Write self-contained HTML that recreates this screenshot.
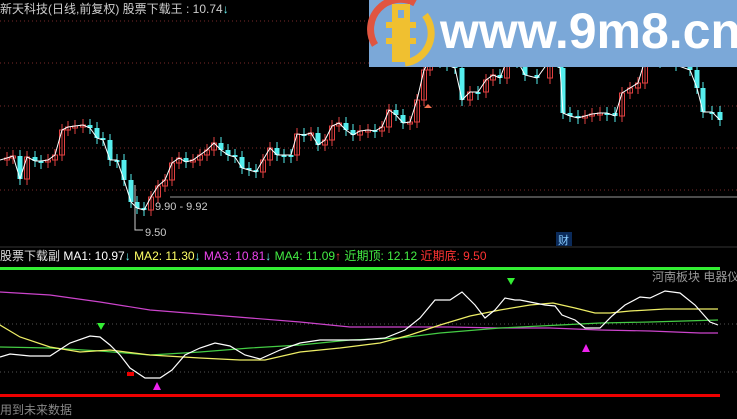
<!DOCTYPE html>
<html><head><meta charset="utf-8"><style>
html,body{margin:0;padding:0;background:#000;width:737px;height:419px;overflow:hidden}
svg{display:block}
text{font-family:"Liberation Sans","Noto Sans CJK SC",sans-serif}
</style></head><body>
<svg id="s" width="737" height="419" xmlns="http://www.w3.org/2000/svg">
<rect width="737" height="419" fill="#000"/>
<g stroke="#7a2a2a" stroke-dasharray="1,3" stroke-width="1">
<line x1="0" y1="21" x2="737" y2="21"/><line x1="0" y1="63" x2="737" y2="63"/>
<line x1="0" y1="106" x2="737" y2="106"/><line x1="0" y1="148" x2="737" y2="148"/>
<line x1="0" y1="190" x2="737" y2="190"/>
</g>
<g stroke="#555" stroke-dasharray="1,3"><line x1="0" y1="324" x2="737" y2="324"/><line x1="0" y1="372" x2="737" y2="372"/></g>
<line x1="170" y1="197" x2="737" y2="197" stroke="#999"/>
<line x1="0" y1="247" x2="737" y2="247" stroke="#333"/>
<g id="candles"></g>
<polyline id="close" fill="none" stroke="#fff" stroke-width="1"/>
<polyline points="135,185 135,230 143,230" fill="none" stroke="#ccc"/>
<text x="155" y="210" font-size="11" fill="#ccc">9.90 - 9.92</text>
<text x="145" y="236" font-size="11" fill="#ccc">9.50</text>
<path d="M424,108 l4,-4 l4,4z" fill="#f07050"/>
<rect x="556" y="232" width="16" height="14" fill="#0a2a5a"/>
<text x="558" y="244" font-size="11" fill="#8cf">财</text>
<text x="0" y="13" font-size="12" fill="#ccc">新天科技(日线,前复权) 股票下载王 : 10.74<tspan fill="#6ee">↓</tspan></text>
<text x="0" y="260" font-size="12" fill="#ddd">股票下载副 <tspan fill="#fff">MA1: 10.97</tspan><tspan fill="#6ee">↓</tspan> <tspan fill="#ff6">MA2: 11.30</tspan><tspan fill="#6ee">↓</tspan> <tspan fill="#e4e">MA3: 10.81</tspan><tspan fill="#6ee">↓</tspan> <tspan fill="#4e4">MA4: 11.09</tspan><tspan fill="#f44">↑</tspan>   <tspan fill="#4e4">近期顶: 12.12</tspan>   <tspan fill="#f33">近期底: 9.50</tspan></text>
<rect x="0" y="267" width="720" height="3" fill="#3e3"/>
<rect x="0" y="394" width="720" height="3" fill="#e00"/>
<text x="652" y="281" font-size="12" fill="#999">河南板块  电器仪</text>
<text x="0" y="414" font-size="12" fill="#888">用到未来数据</text>
<polyline fill="none" stroke="#c4c" stroke-width="1.2" points="0,292 50,295 100,302 150,310 200,314 250,318 300,322 350,327 400,327 450,327 500,328 550,328 600,330 650,331 700,333 718,333"/>
<polyline fill="none" stroke="#4c4" stroke-width="1.2" points="0,347 50,348 100,351 150,355 200,352 250,348 300,345 350,340 400,338 440,333 500,328 560,325 600,323 650,322 718,320"/>
<polyline fill="none" stroke="#ee6" stroke-width="1.2" points="0,325 20,337 50,347 80,352 110,350 150,355 200,358 240,360 265,360 300,352 340,348 380,343 410,335 440,325 470,316 500,310 530,305 553,303 575,308 595,313 610,313 630,311 665,309 675,309 718,309"/>
<polyline fill="none" stroke="#fff" stroke-width="1.2" points="0,357 10,354 30,356 50,356 70,343 90,336 100,337 110,345 120,355 130,368 145,378 160,378 172,370 185,355 200,348 215,343 230,346 245,355 260,359 280,350 300,343 320,340 340,340 360,340 385,338 405,330 420,318 435,300 450,300 462,292 475,305 485,318 495,310 505,298 515,300 520,300 535,303 545,305 555,306 562,315 575,320 585,328 590,328 600,328 612,316 625,305 640,297 650,298 665,291 680,293 695,305 710,322 718,325"/>
<path d="M97,323 h8 l-4,7z M507,278 h8 l-4,7z" fill="#3e3"/>
<path d="M153,390 h8 l-4,-8z M582,352 h8 l-4,-8z" fill="#e2e"/>
<rect x="127" y="372" width="7" height="4" fill="#e00"/>
<rect x="369" y="0" width="368" height="67" fill="#7ba8d8"/>
<path d="M375,45 A30,30 0 0 1 415,3" fill="none" stroke="#e05540" stroke-width="7"/>
<path d="M425,15 A30,30 0 0 1 405,63" fill="none" stroke="#f0c030" stroke-width="7"/>
<rect x="392" y="4" width="18" height="58" fill="#f0c030"/>
<rect x="386" y="22" width="30" height="6" fill="#f0c030"/>
<rect x="386" y="38" width="30" height="6" fill="#f0c030"/>
<rect x="398" y="10" width="6" height="8" fill="#7ba8d8"/>
<text x="440" y="48" font-size="50" font-weight="bold" fill="#fff">www.9m8.cn</text>
</svg>
<script>
var pts=[[0,160],[7,158],[13,156],[20,179],[27,157],[35,161],[41,161],[48,160],[55,155],[62,130],[68,127],[75,126],[83,125],[90,128],[97,138],[103,140],[110,160],[117,160],[124,180],[131,202],[137,208],[144,210],[151,197],[158,186],[165,180],[172,163],[179,158],[186,162],[193,160],[200,155],[207,150],[214,143],[221,150],[228,155],[235,157],[242,168],[249,170],[256,172],[263,160],[270,148],[277,155],[284,155],[291,155],[297,134],[304,135],[311,133],[318,145],[325,140],[332,126],[339,123],[346,130],[353,135],[360,131],[368,130],[375,131],[382,127],[389,110],[396,115],[403,123],[410,122],[417,100],[424,70],[430,60],[440,60],[447,65],[455,68],[462,100],[470,92],[478,92],[486,80],[493,75],[500,78],[507,60],[517,60],[525,75],[537,78],[550,60],[560,68],[563,113],[570,116],[578,118],[585,116],[592,114],[600,113],[607,113],[615,116],[622,93],[630,88],[638,83],[645,60],[660,60],[676,65],[690,70],[697,88],[703,112],[712,112],[720,120]];
var g=document.getElementById('candles'),ns='http://www.w3.org/2000/svg',h='';
for(var i=1;i<pts.length;i++){var x=pts[i][0],y=pts[i][1],py=pts[i-1][1];var up=y<py;var t=Math.min(y,py),b=Math.max(y,py);if(b-t<2)b=t+2;
var c=up?'#e04040':'#5ee';
h+='<line x1="'+x+'" y1="'+(t-6)+'" x2="'+x+'" y2="'+(b+6)+'" stroke="'+c+'"/>';
h+='<rect x="'+(x-2.5)+'" y="'+t+'" width="5" height="'+(b-t)+'" '+(up?'fill="none" stroke="'+c+'"':'fill="'+c+'"')+'/>';}
g.innerHTML=h;
document.getElementById('close').setAttribute('points',pts.map(function(p){return p.join(',')}).join(' '));
</script>
</body></html>
